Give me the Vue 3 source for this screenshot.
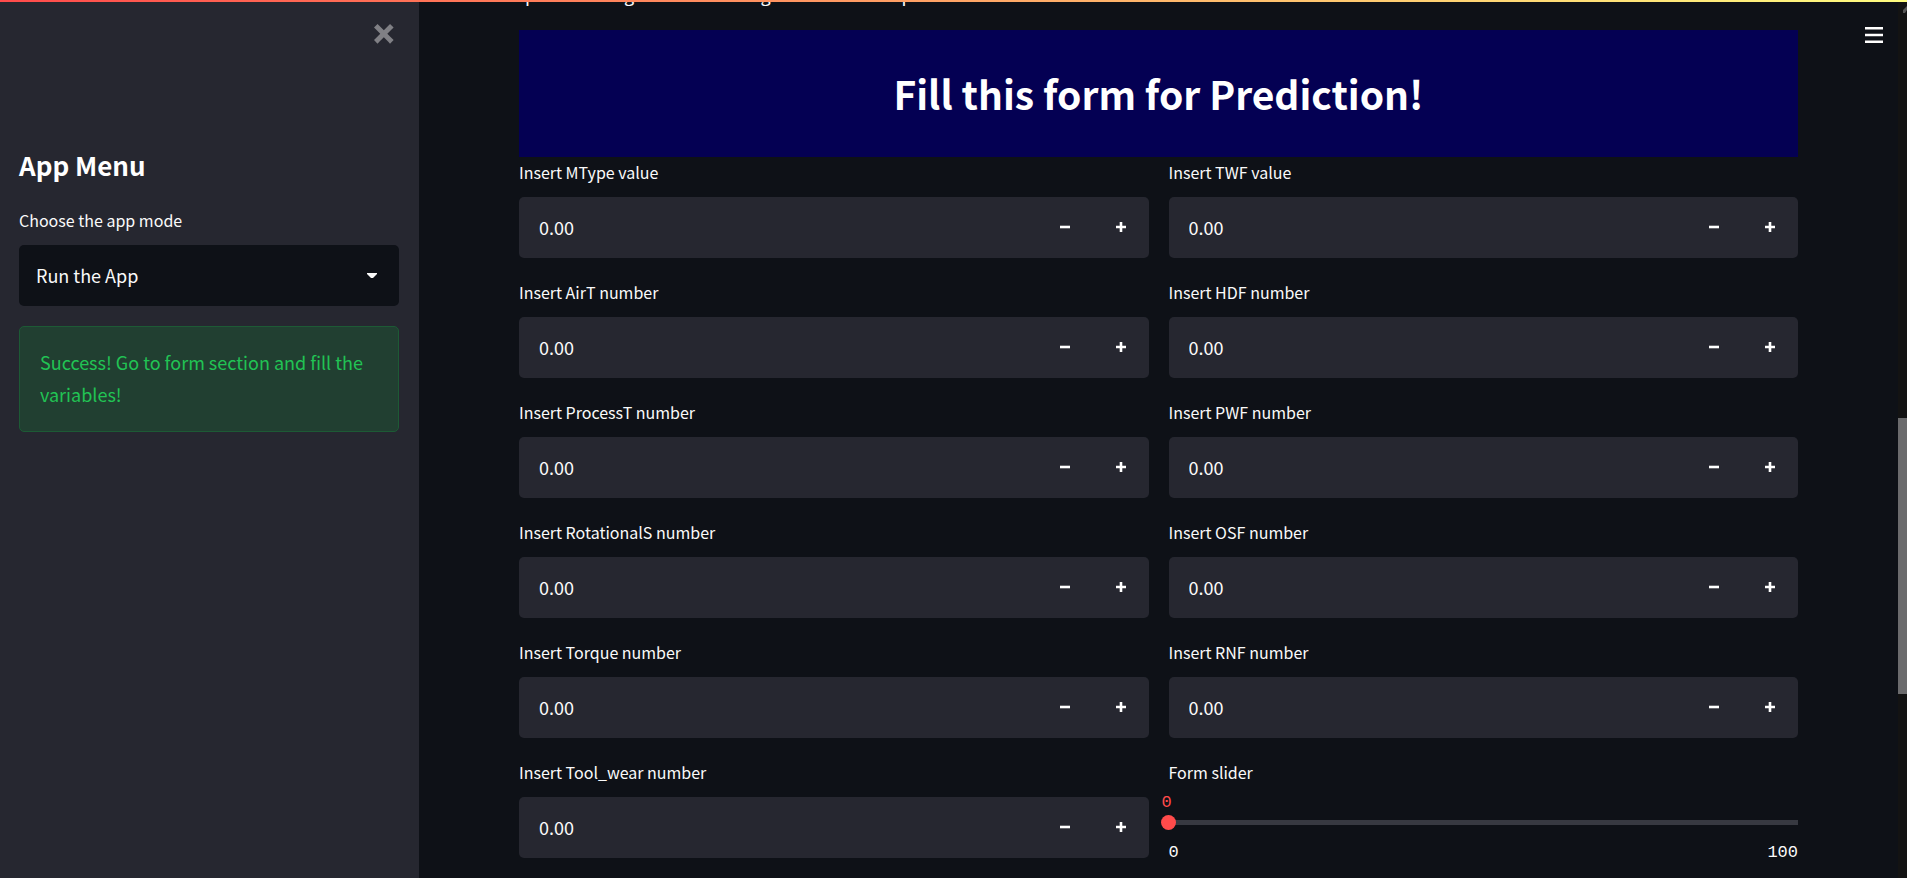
<script setup>
import { ref, reactive } from 'vue'

const mode = ref('Run the App')
const slider = ref(0)
const makeFields = (labels) =>
  labels.map((label, i) => ({ id: label.toLowerCase().replace(/\W+/g, '-') + i, label, value: 0 }))
const columns = reactive([
  makeFields([
    'Insert MType value',
    'Insert AirT number',
    'Insert ProcessT number',
    'Insert RotationalS number',
    'Insert Torque number',
    'Insert Tool_wear number',
  ]),
  makeFields([
    'Insert TWF value',
    'Insert HDF number',
    'Insert PWF number',
    'Insert OSF number',
    'Insert RNF number',
  ]),
])
function step(field, delta) {
  field.value = Math.round((field.value + delta) * 100) / 100
}
</script>

<template>
  <div class="app">
    <div class="decoration"></div>
    <aside class="sidebar">
      <button class="close" type="button" aria-label="Close sidebar">
        <svg viewBox="0 0 8 8" width="20" height="20" fill="currentColor">
          <path d="M1.41 0 0 1.41l.72.72L2.5 3.94.72 5.72 0 6.41l1.41 1.44.72-.72 1.81-1.81 1.78 1.81.69.72 1.44-1.44-.72-.69-1.81-1.78 1.81-1.81.72-.72L6.41 0l-.69.72L3.94 2.5 2.13.72 1.41 0z" />
        </svg>
      </button>
      <h2>App Menu</h2>
      <label class="label" for="mode">Choose the app mode</label>
      <div class="select">
        <select id="mode" v-model="mode">
          <option>Run the App</option>
        </select>
        <svg class="caret" viewBox="0 0 10 6" width="10" height="6" aria-hidden="true">
          <path d="M0 0h10v1L6 5H4L0 1z" fill="currentColor" />
        </svg>
      </div>
      <div class="alert" role="alert">Success! Go to form section and fill the variables!</div>
    </aside>

    <main class="main">
      <p class="intro">predictions guide machines given the sensor parts</p>
      <header class="banner"><h1>Fill this form for Prediction!</h1></header>
      <form class="columns" @submit.prevent>
        <div v-for="(fields, c) in columns" :key="c" class="column">
          <div v-for="f in fields" :key="f.id" class="field">
            <label class="label" :for="f.id">{{ f.label }}</label>
            <div class="number">
              <input :id="f.id" type="text" inputmode="decimal" :value="f.value.toFixed(2)" @change="f.value = Number($event.target.value) || 0" />
              <button type="button" aria-label="Decrease" @click="step(f, -0.01)">
                <svg viewBox="0 0 10 10" width="10" height="10"><path d="M0 3.7h10v2.6H0z" fill="currentColor" /></svg>
              </button>
              <button type="button" aria-label="Increase" @click="step(f, 0.01)">
                <svg viewBox="0 0 10 10" width="10" height="10"><path d="M3.7 0h2.6v3.7H10v2.6H6.3V10H3.7V6.3H0V3.7h3.7z" fill="currentColor" /></svg>
              </button>
            </div>
          </div>
          <div v-if="c === 1" class="field">
            <label class="label" for="form-slider">Form slider</label>
            <output class="thumb-value" for="form-slider">{{ slider }}</output>
            <input id="form-slider" v-model="slider" class="slider" type="range" min="0" max="100" />
            <div class="ticks"><span>0</span><span>100</span></div>
          </div>
        </div>
      </form>
    </main>

    <button class="menu" type="button" aria-label="Menu">
      <svg viewBox="0 0 18 16" width="18" height="16"><path d="M0 0h18v2.4H0zM0 6.8h18v2.4H0zM0 13.6h18V16H0z" fill="currentColor" /></svg>
    </button>
    <div class="scrollbar">
      <svg class="arrow" viewBox="0 0 9 11" width="9" height="11"><path d="M5 8 9 4v4l-2 3H5z" fill="#555" /></svg>
      <div class="scroll-thumb"></div>
    </div>
  </div>
</template>

<style>
body {
  background: #0e1117;
}
</style>

<style scoped>
.app {
  position: relative;
  display: flex;
  height: 100vh;
  overflow: hidden;
  background: #0e1117;
  color: #fafafa;
  font-family: "Noto Sans CJK SC", "Open Sans", sans-serif;
  font-size: 18px;
}
.app * {
  box-sizing: border-box;
}
.decoration {
  position: absolute;
  z-index: 2;
  inset: 0 0 auto;
  height: 2px;
  background: linear-gradient(90deg, #ff4b4b, #fffd80);
}
button {
  display: flex;
  align-items: center;
  justify-content: center;
  padding: 0;
  border: 0;
  background: none;
  color: #fff;
  font: inherit;
  cursor: pointer;
}
.sidebar {
  display: flex;
  flex: 0 0 419px;
  flex-direction: column;
  padding: 24px 20px 0 19px;
  background: #262730;
}
.close {
  align-self: flex-end;
  width: 30px;
  height: 20px;
  color: #808085;
}
h2 {
  margin: 104px 0 0;
  color: #fff;
  font-size: 26px;
  font-weight: 700;
  line-height: 34px;
}
.label {
  display: block;
  height: 32px;
  font-size: 16px;
  line-height: 30px;
}
.sidebar .label {
  margin-top: 23px;
  margin-bottom: 8px;
}
.select {
  position: relative;
}
.select select {
  display: block;
  width: 100%;
  height: 61px;
  padding: 0 40px 2px 17px;
  border: 0;
  border-radius: 5px;
  appearance: none;
  background: #0e1117;
  color: #fafafa;
  font: inherit;
}
.caret {
  position: absolute;
  top: 28px;
  right: 22px;
}
.alert {
  margin-top: 20px;
  padding: 19px 20px 21px;
  border: 1px solid #1d5a35;
  border-radius: 5px;
  background: #213f31;
  color: #21c354;
  line-height: 32px;
}
.main {
  flex: 1;
  padding: 0 109px 0 100px;
}
.intro {
  margin: -21px 0 21px;
  padding-left: 6px;
  line-height: 30px;
}
.banner {
  display: flex;
  align-items: center;
  justify-content: center;
  height: 127px;
  padding-bottom: 2px;
  background: #040053;
}
h1 {
  margin: 0;
  color: #fff;
  font-size: 39px;
  font-weight: 700;
  line-height: 54px;
}
.columns {
  display: grid;
  grid-template-columns: 1fr 1fr;
  gap: 20px;
}
.column {
  min-width: 0;
}
.field {
  height: 120px;
}
.field .label {
  margin-bottom: 8px;
}
.number {
  display: flex;
  height: 61px;
  border-radius: 5px;
  background: #262730;
}
.number input {
  flex: 1;
  min-width: 0;
  padding: 0 20px 2px;
  border: 0;
  background: none;
  color: #fafafa;
  font: inherit;
}
.number button {
  width: 56px;
  padding-bottom: 1px;
}
.thumb-value,
.ticks {
  font-family: "Liberation Mono", monospace;
  font-size: 17px;
}
.thumb-value {
  display: block;
  margin: -5px 0 0 -7px;
  padding-top: 2px;
  color: #ff4b4b;
  line-height: 18px;
}
.slider {
  display: block;
  width: calc(100% + 8px);
  height: 20px;
  margin: 0 0 0 -8px;
  appearance: none;
  background: linear-gradient(#373941, #373941) 8px center / 100% 5px no-repeat;
}
.slider::-webkit-slider-thumb {
  width: 15px;
  height: 15px;
  border-radius: 50%;
  appearance: none;
  background: #ff4b4b;
}
.ticks {
  display: flex;
  justify-content: space-between;
  line-height: 42px;
}
.menu {
  position: absolute;
  top: 20px;
  right: 16px;
  width: 34px;
  height: 30px;
}
.scrollbar {
  position: absolute;
  inset: 2px 0 0 auto;
  width: 9px;
  background: #131313;
}
.arrow {
  display: block;
}
.scroll-thumb {
  height: 276px;
  margin-top: 405px;
  background: #6b6b6d;
}
</style>
